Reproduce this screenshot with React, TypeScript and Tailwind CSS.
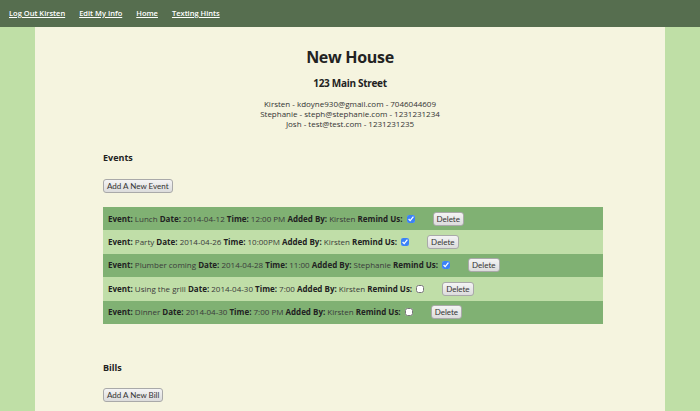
import { useState } from "react";

const roommates = [
  "Kirsten - kdoyne930@gmail.com - 7046044609",
  "Stephanie - steph@stephanie.com - 1231231234",
  "Josh - test@test.com - 1231231235",
];

const events = [
  { name: "Lunch", date: "2014-04-12", time: "12:00 PM", by: "Kirsten", remind: true },
  { name: "Party", date: "2014-04-26", time: "10:00PM", by: "Kirsten", remind: true },
  { name: "Plumber coming", date: "2014-04-28", time: "11:00", by: "Stephanie", remind: true },
  { name: "Using the grill", date: "2014-04-30", time: "7:00", by: "Kirsten", remind: false },
  { name: "Dinner", date: "2014-04-30", time: "7:00 PM", by: "Kirsten", remind: false },
];

const btn =
  "rounded-[3px] border border-[#a9a9a9] bg-gradient-to-b from-[#f4f4f4] to-[#dcdcdc] px-[3px] h-[14px] leading-[12px] text-[8px] text-[#333] font-['Lato','DejaVu_Sans',sans-serif]";

export default function App() {
  const [items, setItems] = useState(events);

  return (
    <div className="min-h-screen bg-[#bfdfa6] font-['Open_Sans','Noto_Sans',sans-serif] text-[#222]">
      <nav className="h-[27px] bg-[#566e4f] flex items-center gap-[14px] px-[9px] text-[7.5px] font-semibold text-white">
        <a href="#" className="underline">Log Out Kirsten</a>
        <a href="#" className="underline">Edit My Info</a>
        <a href="#" className="underline">Home</a>
        <a href="#" className="underline">Texting Hints</a>
      </nav>

      <main className="mx-auto w-[630px] bg-[#f5f4df] pb-10 min-h-[384px]">
        <div className="text-center pt-[17px]">
          <h1 className="text-[16px] font-bold leading-[26px] tracking-[-0.3px]">New House</h1>
          <h2 className="mt-[7px] text-[10px] font-bold leading-[12px] tracking-[-0.3px]">123 Main Street</h2>
          <div className="mt-[10px] text-[8px] leading-[10px] text-[#333]">
            {roommates.map((r) => (
              <div key={r}>{r}</div>
            ))}
          </div>
        </div>

        <section className="px-[68px]">
          <h3 className="mt-[22px] text-[9px] font-bold leading-[14px]">Events</h3>
          <button className={`${btn} mt-[14px]`}>Add A New Event</button>

          <div className="mt-[12px] w-[500px]">
            {items.map((e, i) => (
              <div
                key={e.name}
                className={`h-[23.4px] flex items-center px-[5px] text-[8px] text-[#3a3a3a] ${
                  i % 2 === 0 ? "bg-[#80b173]" : "bg-[#c0dea8]"
                }`}
              >
                <span>
                  <b className="text-[#222]">Event:</b> {e.name} <b className="text-[#222]">Date:</b> {e.date}{" "}
                  <b className="text-[#222]">Time:</b> {e.time} <b className="text-[#222]">Added By:</b> {e.by}{" "}
                  <b className="text-[#222]">Remind Us:</b>
                </span>
                <input
                  type="checkbox"
                  readOnly
                  checked={e.remind}
                  className="ml-[4px] w-[8px] h-[8px] accent-[#3b82f6]"
                />
                <button
                  className={`${btn} ml-[18px]`}
                  onClick={() => setItems(items.filter((x) => x !== e))}
                >
                  Delete
                </button>
              </div>
            ))}
          </div>

          <h3 className="mt-[37px] text-[9px] font-bold leading-[14px]">Bills</h3>
          <button className={`${btn} mt-[13px]`}>Add A New Bill</button>
        </section>
      </main>
    </div>
  );
}
